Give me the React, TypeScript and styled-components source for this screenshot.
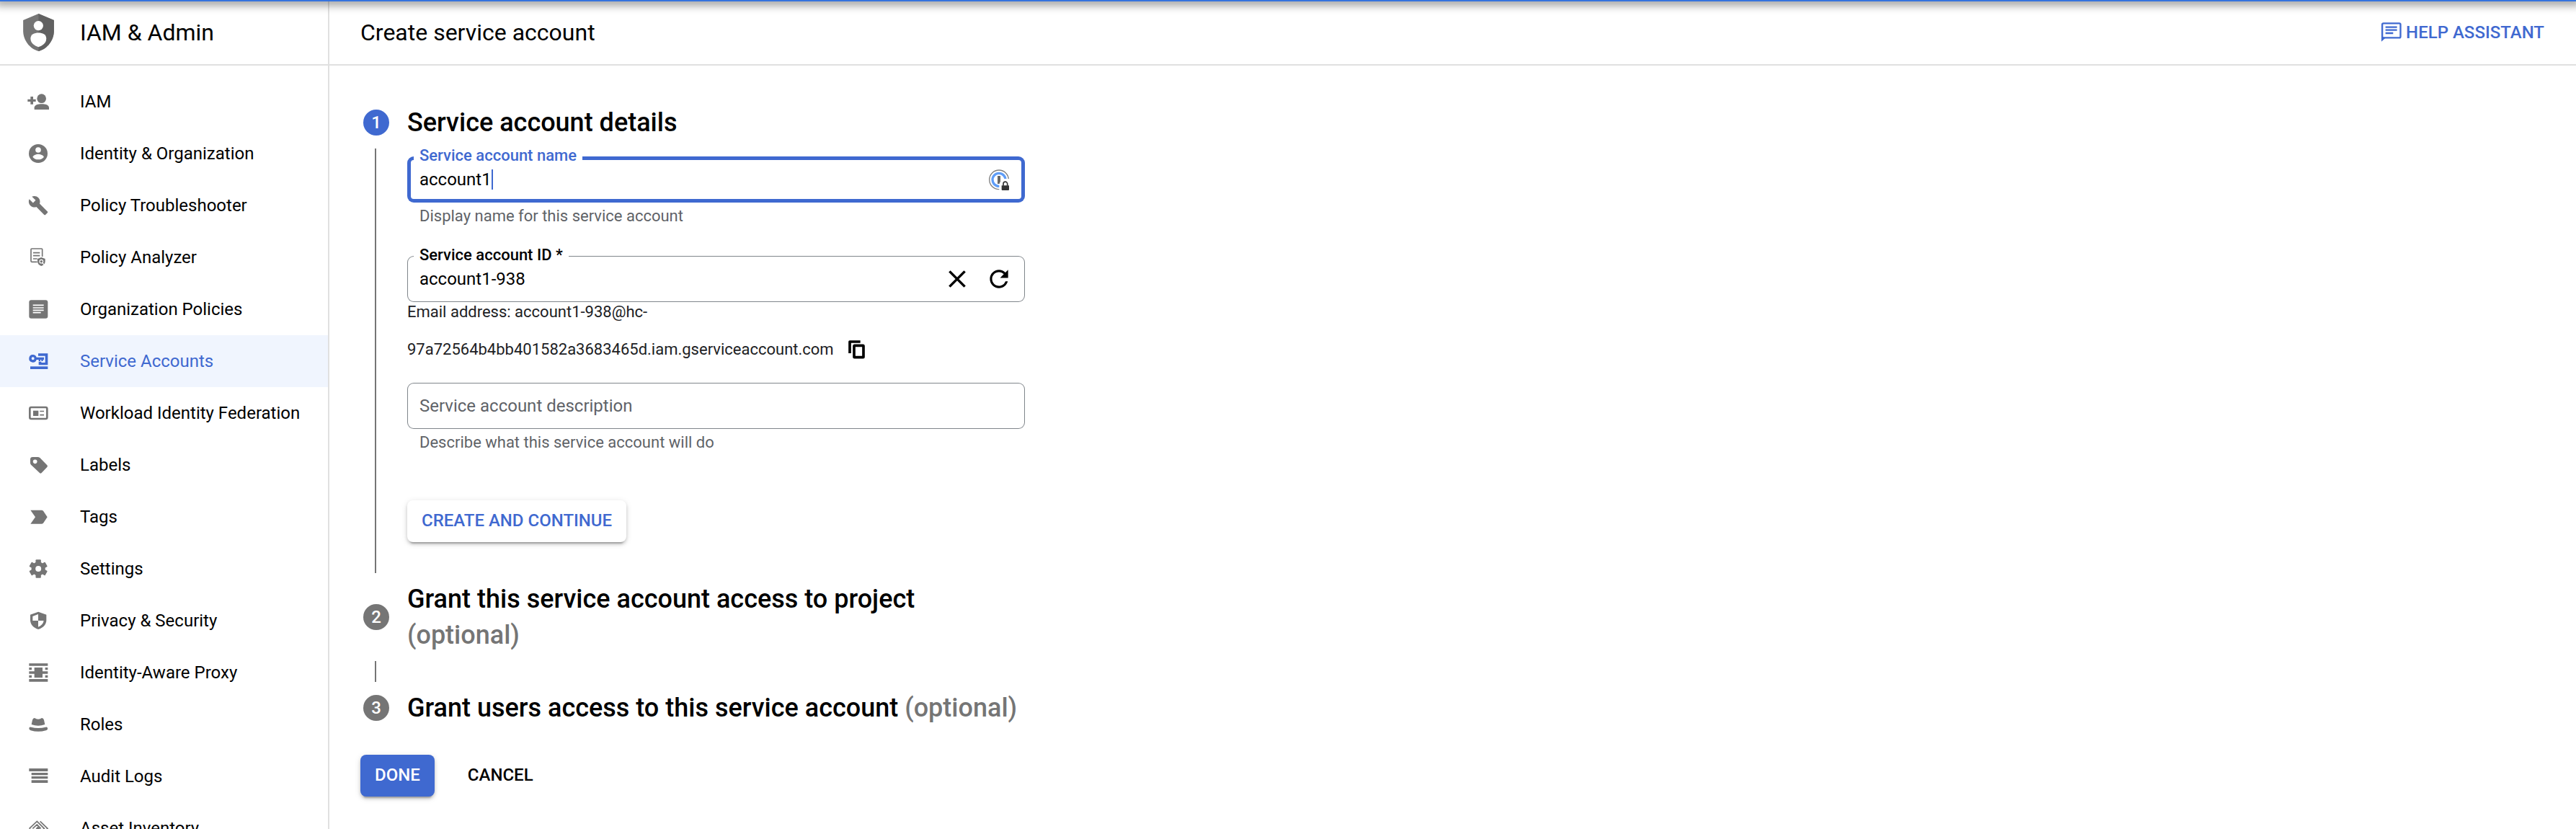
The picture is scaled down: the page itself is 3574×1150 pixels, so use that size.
import React from "react";
import styled, { createGlobalStyle, css } from "styled-components";

const blue = "#3f69d0";
const grey = "#757575";
const line = "#e0e0e0";

const GlobalStyle = createGlobalStyle`
  *, *::before, *::after { box-sizing: border-box; }
  body {
    margin: 0;
    background: #fff;
    color: #000;
    font-family: Roboto, "Liberation Sans", sans-serif;
    font-size: 24px;
    line-height: 32px;
  }
  button, input { font: inherit; color: inherit; }
`;

const Page = styled.div`
  display: flex;
  flex-direction: column;
  height: 100vh;
  overflow: hidden;
`;

const TopBar = styled.div`
  position: relative;
  z-index: 1;
  flex: none;
  height: 2px;
  background: #3573de;
  box-shadow: 0 0 12px 6px rgba(0, 0, 0, 0.36);
`;

const Columns = styled.div`
  display: flex;
  flex: 1;
  min-height: 0;
`;

const Sidebar = styled.aside`
  flex: none;
  width: 457px;
  border-right: 2px solid ${line};
  overflow: hidden;
`;

const Main = styled.main`
  flex: 1;
  min-width: 0;
`;

const bar = css`
  display: flex;
  align-items: center;
  height: 89px;
  padding-bottom: 2px;
  border-bottom: 2px solid ${line};
`;

const ProductBar = styled.div`
  ${bar}
  gap: 36px;
  padding-left: 32px;
`;

const TitleBar = styled.header`
  ${bar}
  justify-content: space-between;
  padding-left: 43px;
  padding-right: 44px;
`;

const BarTitle = styled.h1`
  margin: 0;
  font-size: 32px;
  font-weight: 400;
  line-height: 40px;
`;

const NavList = styled.ul`
  margin: 0;
  padding: 14px 0 0;
  list-style: none;
`;

const NavLink = styled.a<{ $active: boolean }>`
  display: flex;
  align-items: center;
  gap: 42px;
  height: 72px;
  padding-left: 37px;
  text-decoration: none;
  white-space: nowrap;
  color: ${(p) => (p.$active ? blue : "#000")};
  background: ${(p) => (p.$active ? "#f0f5fe" : "transparent")};

  svg {
    flex: none;
    color: ${(p) => (p.$active ? blue : grey)};
  }
`;

const HelpButton = styled.button`
  display: flex;
  align-items: center;
  gap: 6px;
  padding: 0;
  border: 0;
  background: none;
  color: ${blue};
  font-weight: 500;
  cursor: pointer;
`;

const Content = styled.form`
  max-width: 965px;
  padding: 54px 0 0 43px;
`;

const StepHeader = styled.div`
  display: flex;
  align-items: center;
  gap: 25px;
  padding-left: 4px;
`;

const StepNumber = styled.span<{ $active?: boolean }>`
  display: flex;
  flex: none;
  align-items: center;
  justify-content: center;
  width: 36px;
  height: 36px;
  border-radius: 50%;
  background: ${(p) => (p.$active ? blue : grey)};
  color: #fff;
  font-weight: 500;
`;

const StepTitle = styled.h2`
  margin: 0;
  font-size: 36px;
  font-weight: 500;
  line-height: 50px;
`;

const Optional = styled.span`
  color: ${grey};
`;

const StepBody = styled.div`
  display: flex;
  gap: 43px;
  min-height: 29px;
  margin: 11px 0;
  padding-left: 20px;
`;

const Rail = styled.div`
  flex: none;
  width: 2px;
  background: ${grey};
`;

const Fields = styled.div`
  flex: 1;
  min-width: 0;
  padding: 11px 0 43px;
`;

const FieldBox = styled.div<{ $focused?: boolean }>`
  position: relative;
  display: flex;
  align-items: center;
  height: 64px;
  padding: 0 18px 0 17px;
  border-radius: 9px;
  box-shadow: inset 0 0 0 ${(p) => (p.$focused ? `5px ${blue}` : "1px #80868b")};
`;

const FloatingLabel = styled.label<{ $focused?: boolean }>`
  position: absolute;
  top: -14px;
  left: 9px;
  padding: 0 8px;
  background: #fff;
  color: ${(p) => (p.$focused ? blue : "#000")};
  font-size: 22px;
  font-weight: 500;
  line-height: 26px;
`;

const RestingLabel = styled.label`
  position: absolute;
  left: 17px;
  color: #5f6368;
`;

const TextInput = styled.input<{ $hug?: boolean }>`
  flex: ${(p) => (p.$hug ? "none" : "1")};
  ${(p) => p.$hug && "field-sizing: content;"}
  min-width: 0;
  padding: 0;
  border: 0;
  outline: 0;
  background: none;
  caret-color: transparent;
`;

const Caret = styled.span`
  width: 2px;
  height: 28px;
  background: ${blue};
`;

const Spacer = styled.span`
  flex: 1;
`;

const Hint = styled.p`
  margin: 6px 0 0 17px;
  color: #5f6368;
  font-size: 22px;
  line-height: 26px;
`;

const IdField = styled.div`
  margin-top: 42px;
`;

const FieldTools = styled.div`
  display: flex;
  align-items: center;
  gap: 22px;
`;

const Email = styled.div`
  color: #202124;
  font-size: 22px;
  line-height: 28px;
`;

const EmailRow = styled.div`
  display: flex;
  align-items: center;
  gap: 8px;
  margin-top: 14px;
`;

const IconButton = styled.button<{ $size: number }>`
  display: flex;
  flex: none;
  align-items: center;
  justify-content: center;
  width: ${(p) => p.$size}px;
  height: ${(p) => p.$size}px;
  padding: 0;
  border: 0;
  background: none;
  color: #000;
  cursor: pointer;

  svg {
    flex: none;
  }
`;

const DescriptionField = styled.div`
  margin-top: 22px;
`;

const Button = styled.button<{ $kind: "raised" | "primary" | "text" }>`
  height: 58px;
  padding: 0 20px 2px;
  border: 0;
  border-radius: 8px;
  font-weight: 500;
  cursor: pointer;
  color: ${(p) => ({ raised: blue, primary: "#fff", text: "#000" })[p.$kind]};
  background: ${(p) => (p.$kind === "primary" ? blue : "#fff")};
  box-shadow: ${(p) =>
    p.$kind === "text"
      ? "none"
      : "0 6px 2px -4px rgba(0,0,0,.2), 0 3px 4px rgba(0,0,0,.16), 0 2px 10px rgba(0,0,0,.12)"};
`;

const SubmitRow = styled.div`
  margin-top: 67px;
`;

const Actions = styled.div`
  display: flex;
  gap: 26px;
  margin-top: 40px;
`;

/* ---- Icons ---- */

const NavIcon = ({ children }: { children: React.ReactNode }) => (
  <svg width="32" height="32" viewBox="0 0 96 96" fill="currentColor" aria-hidden="true">
    {children}
  </svg>
);

const icons = {
  iam: (
    <>
      <path d="M16 27h11v11h11v10H27v11H16V48H4V38h12z" />
      <circle cx="62" cy="35" r="19" />
      <path d="M32 81V73C32 62 48 58 62.500 58S93 62 93 73V81z" />
    </>
  ),
  identity: (
    <>
      <circle cx="48" cy="48" r="39" />
      <circle cx="48" cy="33" r="11.500" fill="#fff" />
      <path d="M25 62C30 53 40 50 48 50S67 53 72 62C67 69 58 73 48 73S30 69 25 62z" fill="#fff" />
    </>
  ),
  wrench: (
    <path
      transform="translate(5 5) scale(3.6)"
      d="M22.700 19l-9.100-9.100c.9-2.300.4-5-1.500-6.900-2-2-5-2.400-7.400-1.300L9 6 6 9 1.600 4.700C.4 7.100.9 10.100 2.900 12.100c1.900 1.900 4.600 2.400 6.900 1.500l9.100 9.100c.4.4 1 .4 1.400 0l2.300-2.300c.5-.4.5-1.100.1-1.400z"
    />
  ),
  analyzer: (
    <>
      <path
        d="M44 67H21q-3 0-3-3V15q0-3 3-3h41q3 0 3 3v30M27 29h28M27 41h28M27 54h17"
        fill="none"
        stroke="currentColor"
        strokeWidth="5"
      />
      <path d="M61 48l16 6v11c0 9-7 16-16 19-9-3-16-10-16-19V54z" />
      <circle cx="61" cy="65" r="7" fill="none" stroke="#fff" strokeWidth="3.500" />
      <path d="M65 70l8 9" stroke="#fff" strokeWidth="3.500" />
    </>
  ),
  policies: (
    <>
      <rect x="10" y="10" width="78" height="76" rx="9" />
      <path d="M26 31h45M26 42h45M26 52h45M26 62h33" stroke="#fff" strokeWidth="5" />
    </>
  ),
  service: (
    <>
      <path
        fillRule="evenodd"
        d="M26 21a16 16 0 0 1 15 11h31v10h-4v6h-7v-6h-4v6h-7v-6h-9a16 16 0 1 1-15-21zm0 10a6 6 0 1 0 0 12 6 6 0 0 0 0-12z"
      />
      <path d="M48 16h40v48H50V50h11v4h16V26H48z" />
      <path d="M15 70h73v11H15z" />
    </>
  ),
  workload: (
    <>
      <rect x="13" y="24" width="72" height="48" rx="6" fill="none" stroke="currentColor" strokeWidth="8" />
      <path d="M27 38h22v22H27z" />
      <path d="M55 40.500h17M55 56h17" stroke="currentColor" strokeWidth="5" />
    </>
  ),
  labels: (
    <>
      <path d="M15 25Q15 15 25 15H46Q51 15 55 18L85 49Q89 53 85 57L62 81Q58 85 54 81L18 47Q15 44 15 40z" />
      <circle cx="35" cy="34" r="8.500" fill="#fff" />
    </>
  ),
  tags: <path d="M16 20H62Q66 20 69 23L86 48.500 69 74Q66 77 62 77H16L36 48.500z" />,
  settings: (
    <>
      <circle cx="48.500" cy="48" r="29" />
      {[0, 60, 120].map((a) => (
        <rect key={a} x="37.500" y="10" width="22" height="76" rx="3" transform={`rotate(${a} 48.500 48)`} />
      ))}
      <circle cx="48.500" cy="48" r="12" fill="#fff" />
    </>
  ),
  privacy: (
    <>
      <path d="M48.500 11L82 23V46C82 64 68 79 48.500 84C29 79 15 64 15 46V23z" />
      <path d="M48 21L25 30V48H48zM48 48H71C69 61 61 69 48 74z" fill="#fff" />
    </>
  ),
  proxy: (
    <path d="M10 10h78v10H10zM10 75h78v11H10zM32 27h34v16h22v10H66v16H32V53H10V43h22zM10 27h11v10H10zM77 27h11v10H77zM10 59h11v10H10zM77 59h11v10H77z" />
  ),
  roles: (
    <>
      <path d="M24 29Q26 21 33 21Q40 26 48 26Q56 26 63 21Q70 21 72 29L76 48Q62 53 48 53Q34 53 20 48z" />
      <path d="M10 63Q11 57 18 59Q48 67 79 59Q86 57 87 63Q89 70 80 73Q48 82 17 73Q9 70 10 63z" />
    </>
  ),
  audit: <path d="M10 15h78v12H10zM20 33h68v10H20zM20 48h68v10H20zM20 64h68v11H20z" />,
  asset: (
    <>
      <path
        d="M11 49L43 19L73 49L48 75M56 19L87 49L56 78M11 49L42 78M25 49L43 33L59 49"
        fill="none"
        stroke="currentColor"
        strokeWidth="5"
      />
      <path d="M47 40l9 9-9 9-9-9z" />
    </>
  ),
};

const ShieldLogo = () => (
  <svg width="43" height="52" viewBox="96 56 129 157" aria-hidden="true">
    <path d="M160.500 56L225 83V128C225 166 199 203 160.500 213C122 203 96 166 96 128V83z" fill="#757575" />
    <path d="M160.500 56L225 83V128C225 166 199 203 160.500 213z" fill="#616161" />
    <circle cx="160" cy="106" r="20" fill="#fff" />
    <path d="M127 160C127 142 143 136 160 136S193 142 193 160C193 181 175 190 160 196C145 190 127 181 127 160z" fill="#fff" />
  </svg>
);

const ChatIcon = () => (
  <svg width="28" height="28" viewBox="112 94 84 84" fill="none" stroke="currentColor" strokeWidth="7" aria-hidden="true">
    <rect x="115.500" y="98" width="76" height="60" rx="5" />
    <path d="M129 114h48M129 126h48M129 139h32" />
    <path d="M112 154v20l18-16z" fill="currentColor" stroke="none" />
  </svg>
);

const PasswordIcon = () => (
  <svg width="28" height="29" viewBox="1236 162 84 87" aria-hidden="true">
    <circle cx="1278" cy="205" r="40" fill="#fff" stroke="#808080" strokeWidth="4" />
    <circle cx="1278" cy="205" r="27" fill="none" stroke="#5f9df7" strokeWidth="10" />
    <path d="M1272 189h12v33h-12z" fill="#666" />
    <path d="M1279 249V226q6-25 24-25h17v48z" fill="#fff" />
    <path d="M1289 229h31v17q0 3-3 3h-25q-3 0-3-3z" fill="#333" />
    <path d="M1296 230v-8a8.500 8.500 0 0 1 17 0v8" fill="none" stroke="#333" strokeWidth="5" />
  </svg>
);

const CloseIcon = () => (
  <svg width="24" height="24" viewBox="0 0 69 69" stroke="currentColor" strokeWidth="10" aria-hidden="true">
    <path d="M4 4l61 61M65 4L4 65" />
  </svg>
);

const RefreshIcon = () => (
  <svg width="38" height="38" viewBox="0 0 24 24" fill="currentColor" aria-hidden="true">
    <path d="M17.650 6.350C16.200 4.900 14.210 4 12 4c-4.420 0-7.990 3.580-7.990 8s3.570 8 7.990 8c3.730 0 6.840-2.550 7.730-6h-2.080c-.82 2.330-3.040 4-5.650 4-3.310 0-6-2.690-6-6s2.690-6 6-6c1.660 0 3.140.69 4.220 1.780L13 11h7V4l-2.350 2.350z" />
  </svg>
);

const CopyIcon = () => (
  <svg width="23" height="26" viewBox="0 0 69 78" fill="none" stroke="currentColor" aria-hidden="true">
    <path d="M50 6H6V54" strokeWidth="11" strokeLinejoin="round" />
    <rect x="24" y="22" width="39" height="49" rx="2" strokeWidth="11" />
  </svg>
);

const navItems: { icon: keyof typeof icons; label: string; active?: boolean }[] = [
  { icon: "iam", label: "IAM" },
  { icon: "identity", label: "Identity & Organization" },
  { icon: "wrench", label: "Policy Troubleshooter" },
  { icon: "analyzer", label: "Policy Analyzer" },
  { icon: "policies", label: "Organization Policies" },
  { icon: "service", label: "Service Accounts", active: true },
  { icon: "workload", label: "Workload Identity Federation" },
  { icon: "labels", label: "Labels" },
  { icon: "tags", label: "Tags" },
  { icon: "settings", label: "Settings" },
  { icon: "privacy", label: "Privacy & Security" },
  { icon: "proxy", label: "Identity-Aware Proxy" },
  { icon: "roles", label: "Roles" },
  { icon: "audit", label: "Audit Logs" },
  { icon: "asset", label: "Asset Inventory" },
];

export default function App() {
  return (
    <Page>
      <GlobalStyle />
      <TopBar />
      <Columns>
        <Sidebar>
          <ProductBar>
            <ShieldLogo />
            <BarTitle as="div">IAM &amp; Admin</BarTitle>
          </ProductBar>
          <nav aria-label="IAM & Admin">
            <NavList>
              {navItems.map((item) => (
                <li key={item.label}>
                  <NavLink href="#" $active={!!item.active} aria-current={item.active ? "page" : undefined}>
                    <NavIcon>{icons[item.icon]}</NavIcon>
                    {item.label}
                  </NavLink>
                </li>
              ))}
            </NavList>
          </nav>
        </Sidebar>
        <Main>
          <TitleBar>
            <BarTitle>Create service account</BarTitle>
            <HelpButton type="button">
              <ChatIcon />
              HELP ASSISTANT
            </HelpButton>
          </TitleBar>
          <Content onSubmit={(e) => e.preventDefault()}>
            <StepHeader>
              <StepNumber $active>1</StepNumber>
              <StepTitle>Service account details</StepTitle>
            </StepHeader>
            <StepBody>
              <Rail />
              <Fields>
                <FieldBox $focused>
                  <FloatingLabel $focused htmlFor="account-name">
                    Service account name
                  </FloatingLabel>
                  <TextInput $hug id="account-name" type="text" defaultValue="account1" />
                  <Caret />
                  <Spacer />
                  <IconButton type="button" $size={36} aria-label="Fill from password manager">
                    <PasswordIcon />
                  </IconButton>
                </FieldBox>
                <Hint>Display name for this service account</Hint>

                <IdField>
                  <FieldBox>
                    <FloatingLabel htmlFor="account-id">Service account ID *</FloatingLabel>
                    <TextInput id="account-id" type="text" defaultValue="account1-938" />
                    <FieldTools>
                      <IconButton type="button" $size={36} aria-label="Clear">
                        <CloseIcon />
                      </IconButton>
                      <IconButton type="button" $size={36} aria-label="Regenerate ID">
                        <RefreshIcon />
                      </IconButton>
                    </FieldTools>
                  </FieldBox>
                  <Email>
                    <div>Email address: account1-938@hc-</div>
                    <EmailRow>
                      97a72564b4bb401582a3683465d.iam.gserviceaccount.com
                      <IconButton type="button" $size={48} aria-label="Copy email address">
                        <CopyIcon />
                      </IconButton>
                    </EmailRow>
                  </Email>
                </IdField>

                <DescriptionField>
                  <FieldBox>
                    <RestingLabel htmlFor="account-description">Service account description</RestingLabel>
                    <TextInput id="account-description" type="text" />
                  </FieldBox>
                  <Hint>Describe what this service account will do</Hint>
                </DescriptionField>

                <SubmitRow>
                  <Button $kind="raised" type="submit">
                    CREATE AND CONTINUE
                  </Button>
                </SubmitRow>
              </Fields>
            </StepBody>

            <StepHeader>
              <StepNumber>2</StepNumber>
              <StepTitle>
                Grant this service account access to project <Optional>(optional)</Optional>
              </StepTitle>
            </StepHeader>
            <StepBody>
              <Rail />
            </StepBody>

            <StepHeader>
              <StepNumber>3</StepNumber>
              <StepTitle>
                Grant users access to this service account <Optional>(optional)</Optional>
              </StepTitle>
            </StepHeader>

            <Actions>
              <Button $kind="primary" type="button">
                DONE
              </Button>
              <Button $kind="text" type="button">
                CANCEL
              </Button>
            </Actions>
          </Content>
        </Main>
      </Columns>
    </Page>
  );
}
